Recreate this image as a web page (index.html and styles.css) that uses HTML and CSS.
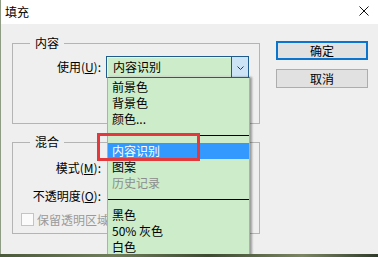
FILE: index.html
```html
<!DOCTYPE html>
<html lang="zh">
<head>
<meta charset="utf-8">
<title>填充</title>
<link rel="stylesheet" href="styles.css">
</head>
<body>
<div class="window">
  <div class="titlebar">
    <span class="title">填充</span>
    <svg class="close" width="10" height="10" viewBox="0 0 10 10"><path d="M0.5 0.5 L9.5 9.5 M9.5 0.5 L0.5 9.5" stroke="#111" stroke-width="1" fill="none"/></svg>
  </div>
  <div class="main">
    <div class="groups">
      <fieldset class="group g1">
        <legend>内容</legend>
        <div class="row r-use">
          <span class="lbl">使用(<u>U</u>):</span>
          <div class="combo">
            <span class="combo-text">内容识别</span>
            <span class="combo-btn"><svg width="7" height="4" viewBox="0 0 7 4"><path d="M0.5 0.5 L3.5 3.5 L6.5 0.5" stroke="#3a3a3a" stroke-width="1" fill="none"/></svg></span>
          </div>
        </div>
      </fieldset>
      <fieldset class="group g2">
        <legend>混合</legend>
        <div class="row r-mode"><span class="lbl">模式(<u>M</u>):</span></div>
        <div class="row r-opacity"><span class="lbl">不透明度(<u>O</u>):</span></div>
        <div class="row r-check"><span class="check"></span><span class="check-lbl">保留透明区域</span></div>
      </fieldset>
    </div>
    <div class="buttons">
      <button class="btn primary">确定</button>
      <button class="btn">取消</button>
    </div>
  </div>
  <ul class="dropdown">
    <li>前景色</li>
    <li>背景色</li>
    <li>颜色...</li>
    <li class="sep"></li>
    <li class="sel">内容识别</li>
    <li>图案</li>
    <li class="dis">历史记录</li>
    <li class="sep"></li>
    <li>黑色</li>
    <li>50% 灰色</li>
    <li>白色</li>
  </ul>
  <div class="mark"></div>
</div>
</body>
</html>
```

FILE: styles.css
```css
html, body {
  margin: 0;
  padding: 0;
}
body {
  width: 378px;
  height: 257px;
  overflow: hidden;
  background: linear-gradient(90deg, #4c5a3c 0%, #6f7d5b 30%, #3d4a30 55%, #7b8563 80%, #2f3a2a 100%);
  font-family: "Noto Sans CJK SC", "Noto Sans", sans-serif;
  font-size: 12px;
  color: #000;
}
.window {
  position: relative;
  height: 254px;
  background: #efefef;
  border-left: 1px solid #8d9c82;
  overflow: hidden;
}
.titlebar {
  height: 24px;
  background: #fff;
  display: flex;
  align-items: center;
  justify-content: space-between;
  padding: 0 9px 0 4px;
}
.title {
  font-size: 12px;
  line-height: 16px;
}
.close {
  display: block;
  margin-top: -2px;
}
.main {
  display: flex;
  padding: 11px 0 0 11px;
  gap: 16px;
}
.groups {
  display: flex;
  flex-direction: column;
  gap: 10px;
  width: 248px;
}
.group {
  margin: 0;
  border: 1px solid #b4b4b4;
  padding: 0;
  min-width: 0;
}
.group legend {
  margin-left: 17px;
  padding: 0 5px;
  line-height: 16px;
  font-size: 12px;
}
.g1 {
  padding: 5px 0 45px;
}
.g2 {
  padding: 7px 0 6px;
}
.row {
  display: flex;
  align-items: center;
  height: 22px;
}
.lbl {
  width: 88px;
  text-align: right;
  margin-right: 5px;
  line-height: 16px;
  white-space: nowrap;
}
.r-opacity {
  margin-top: 6px;
}
.r-check {
  margin-top: 5px;
  height: 15px;
  padding-left: 8px;
}
.check {
  width: 11px;
  height: 11px;
  border: 1px solid #c4c4c4;
  background: #fbfbfb;
  margin-right: 3px;
}
.check-lbl {
  color: #9a9a9a;
  line-height: 16px;
  white-space: nowrap;
}
.combo {
  width: 143px;
  height: 22px;
  box-sizing: border-box;
  border: 1px solid #1f5c8b;
  background: #cdecc9;
  box-shadow: inset 0 0 0 1px #e8f6e6;
  display: flex;
  align-items: center;
}
.combo-text {
  flex: 1;
  padding-left: 6px;
  line-height: 16px;
}
.combo-btn {
  width: 16px;
  align-self: stretch;
  border-left: 1px solid #1f5c8b;
  background: #cde4f7;
  display: flex;
  align-items: center;
  justify-content: center;
}
.combo-btn svg {
  display: block;
  margin-top: 1px;
}
.buttons {
  display: flex;
  flex-direction: column;
  gap: 9px;
  padding-top: 6px;
}
.btn {
  width: 92px;
  height: 19px;
  box-sizing: border-box;
  margin: 0;
  padding: 0;
  border: 1px solid #adadad;
  background: #e1e1e1;
  font-family: "Noto Sans CJK SC", "Noto Sans", sans-serif;
  font-size: 12px;
  line-height: 15px;
  color: #000;
}
.btn.primary {
  border: 2px solid #0a74cf;
  line-height: 13px;
}
.dropdown {
  position: absolute;
  left: 106px;
  top: 77px;
  width: 143px;
  height: 190px;
  box-sizing: border-box;
  margin: 0;
  padding: 1px 0 0;
  list-style: none;
  background: #cdecc9;
  border: 1px solid #5ccdea;
  border-top-color: #1f5c8b;
  box-shadow: 2px 0 2px rgba(0, 0, 0, 0.35);
}
.dropdown li {
  height: 16px;
  line-height: 16px;
  padding-left: 4px;
  white-space: nowrap;
}
.dropdown li.sep {
  display: flex;
  align-items: center;
  padding: 0;
}
.dropdown li.sep::before {
  content: "";
  display: block;
  width: 100%;
  height: 1px;
  background: #000;
}
.dropdown li.sel {
  background: #3399ff;
  color: #fff;
}
.dropdown li.dis {
  color: #8c8c8c;
}
.mark {
  position: absolute;
  left: 96px;
  top: 133px;
  width: 103px;
  height: 28px;
  box-sizing: border-box;
  border: 3px solid #e4393c;
}
```
